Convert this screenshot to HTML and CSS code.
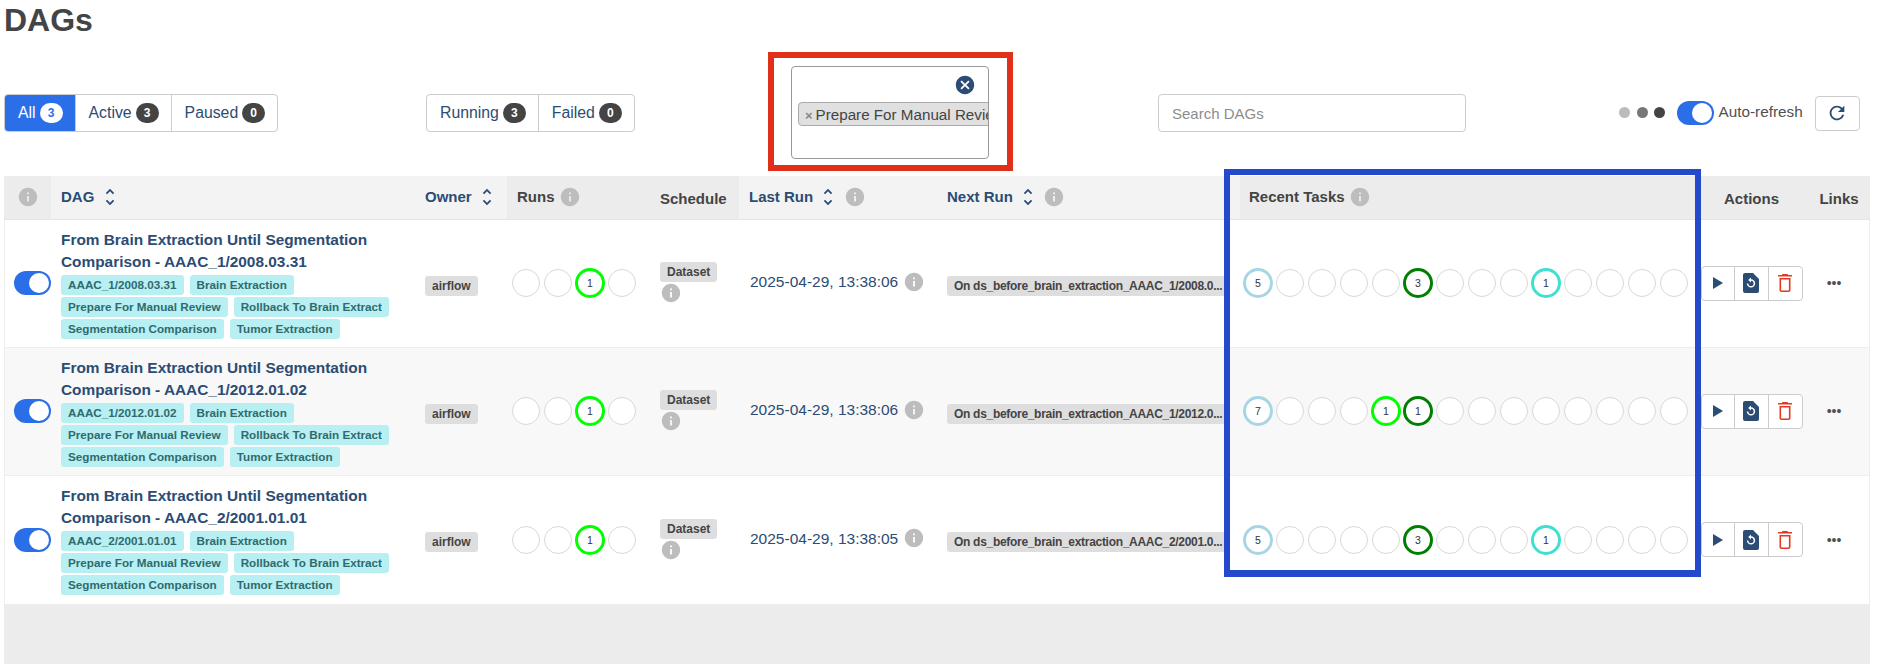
FILE: index.html
```html
<!DOCTYPE html>
<html lang="en">
<head>
<meta charset="UTF-8">
<title>DAGs - Airflow</title>
<link rel="stylesheet" href="styles.css">
</head>
<body>
<svg class="sprite" width="0" height="0">
  <symbol id="i-info" viewBox="0 0 24 24"><path d="M12 2C6.48 2 2 6.48 2 12s4.48 10 10 10 10-4.48 10-10S17.52 2 12 2zm1 15h-2v-6h2v6zm0-8h-2V7h2v2z"/></symbol>
  <symbol id="i-sort" viewBox="0 0 24 24"><path d="M12 5.83L15.17 9l1.41-1.41L12 3 7.41 7.59 8.83 9 12 5.83zm0 12.34L8.83 15l-1.41 1.41L12 21l4.59-4.59L15.17 15 12 18.17z"/></symbol>
  <symbol id="i-cancel" viewBox="0 0 24 24"><path d="M12 2C6.47 2 2 6.47 2 12s4.47 10 10 10 10-4.47 10-10S17.53 2 12 2zm5 13.59L15.59 17 12 13.41 8.41 17 7 15.59 10.59 12 7 8.41 8.41 7 12 10.59 15.59 7 17 8.41 13.41 12 17 15.59z"/></symbol>
  <symbol id="i-refresh" viewBox="0 0 24 24"><path d="M17.65 6.35C16.2 4.9 14.21 4 12 4c-4.42 0-7.99 3.58-7.99 8s3.57 8 7.99 8c3.73 0 6.84-2.55 7.73-6h-2.08c-.82 2.33-3.04 4-5.65 4-3.31 0-6-2.69-6-6s2.69-6 6-6c1.66 0 3.14.69 4.22 1.78L13 11h7V4l-2.35 2.35z"/></symbol>
  <symbol id="i-play" viewBox="0 0 10 12"><path d="M0 0v12l10-6z"/></symbol>
  <symbol id="i-doc" viewBox="0 0 16 20"><path fill-rule="evenodd" d="M2 0h8l6 6v12a2 2 0 0 1-2 2H2a2 2 0 0 1-2-2V2a2 2 0 0 1 2-2zm6 6.2V4.4L5.2 7 8 9.6V7.8a2.6 2.6 0 1 1-2.6 2.6H3.8a4.2 4.2 0 1 0 4.2-4.2z"/></symbol>
  <symbol id="i-trash" viewBox="0 0 14 18"><path fill-rule="evenodd" d="M4.5 0h5l.7 1H14v1.600H0V1h3.800zM1.500 4h11v12a2 2 0 0 1-2 2h-7a2 2 0 0 1-2-2zm1.600 1.600V16a.4.4 0 0 0 .4.4h7a.4.4 0 0 0 .4-.4V5.600z"/></symbol>
</svg>

<h1 class="title">DAGs</h1>

<div class="toolbar">
  <div class="btn-group">
    <a class="filter active">All <span class="badge">3</span></a>
    <a class="filter">Active <span class="badge">3</span></a>
    <a class="filter">Paused <span class="badge">0</span></a>
  </div>
  <div class="btn-group">
    <a class="filter">Running <span class="badge">3</span></a>
    <a class="filter">Failed <span class="badge">0</span></a>
  </div>
  <div class="tag-select">
    <svg class="clear-icon"><use href="#i-cancel"/></svg>
    <div class="select-choice"><span class="choice-x">×</span>Prepare For Manual Review</div>
  </div>
  <div><input class="search" type="text" placeholder="Search DAGs"></div>
  <div class="refresh-box">
    <span class="dots"><i class="dot d1"></i><i class="dot d2"></i><i class="dot d3"></i></span>
    <span class="toggle"><i></i></span>
    <span class="auto-label">Auto-refresh</span>
    <button class="refresh-btn"><svg><use href="#i-refresh"/></svg></button>
  </div>
</div>

<div class="table-wrap">
  <table class="dags">
    <colgroup>
      <col class="c-pause"><col class="c-dag"><col class="c-owner"><col class="c-runs"><col class="c-sched">
      <col class="c-last"><col class="c-next"><col class="c-tasks"><col class="c-actions"><col class="c-links">
    </colgroup>
    <thead>
      <tr>
        <th class="center"><svg class="info"><use href="#i-info"/></svg></th>
        <th class="sortable">DAG <svg class="sort"><use href="#i-sort"/></svg></th>
        <th class="sortable">Owner <svg class="sort"><use href="#i-sort"/></svg></th>
        <th>Runs <svg class="info"><use href="#i-info"/></svg></th>
        <th>Schedule</th>
        <th class="sortable">Last Run <svg class="sort"><use href="#i-sort"/></svg> <svg class="info"><use href="#i-info"/></svg></th>
        <th class="sortable">Next Run <svg class="sort"><use href="#i-sort"/></svg> <svg class="info"><use href="#i-info"/></svg></th>
        <th class="tasks-head">Recent Tasks <svg class="info"><use href="#i-info"/></svg></th>
        <th class="center">Actions</th>
        <th class="center">Links</th>
      </tr>
    </thead>
    <tbody>
      <tr>
        <td class="pause"><span class="toggle"><i></i></span></td>
        <td>
          <a class="dag-name">From Brain Extraction Until Segmentation Comparison - AAAC_1/2008.03.31</a>
          <div class="tags">
            <span class="tag">AAAC_1/2008.03.31</span><span class="tag">Brain Extraction</span>
            <span class="tag">Prepare For Manual Review</span><span class="tag">Rollback To Brain Extract</span>
            <span class="tag">Segmentation Comparison</span><span class="tag">Tumor Extraction</span>
          </div>
        </td>
        <td><span class="label nudge">airflow</span></td>
        <td class="runs">
          <div class="circles"><span class="c"></span><span class="c"></span><span class="c on lime">1</span><span class="c"></span></div>
        </td>
        <td><span class="label">Dataset</span><svg class="info below"><use href="#i-info"/></svg></td>
        <td class="last-run">2025-04-29, 13:38:06 <svg class="info"><use href="#i-info"/></svg></td>
        <td><span class="label nudge next">On ds_before_brain_extraction_AAAC_1/2008.0...</span></td>
        <td class="tasks">
          <div class="circles">
            <span class="c on sky">5</span><span class="c"></span><span class="c"></span><span class="c"></span><span class="c"></span>
            <span class="c on green">3</span><span class="c"></span><span class="c"></span><span class="c"></span>
            <span class="c on teal">1</span><span class="c"></span><span class="c"></span><span class="c"></span><span class="c"></span>
          </div>
        </td>
        <td class="center">
          <div class="actions">
            <button><svg class="play"><use href="#i-play"/></svg></button><button><svg class="doc"><use href="#i-doc"/></svg></button><button><svg class="trash"><use href="#i-trash"/></svg></button>
          </div>
        </td>
        <td class="links">•••</td>
      </tr>
      <tr>
        <td class="pause"><span class="toggle"><i></i></span></td>
        <td>
          <a class="dag-name">From Brain Extraction Until Segmentation Comparison - AAAC_1/2012.01.02</a>
          <div class="tags">
            <span class="tag">AAAC_1/2012.01.02</span><span class="tag">Brain Extraction</span>
            <span class="tag">Prepare For Manual Review</span><span class="tag">Rollback To Brain Extract</span>
            <span class="tag">Segmentation Comparison</span><span class="tag">Tumor Extraction</span>
          </div>
        </td>
        <td><span class="label nudge">airflow</span></td>
        <td class="runs">
          <div class="circles"><span class="c"></span><span class="c"></span><span class="c on lime">1</span><span class="c"></span></div>
        </td>
        <td><span class="label">Dataset</span><svg class="info below"><use href="#i-info"/></svg></td>
        <td class="last-run">2025-04-29, 13:38:06 <svg class="info"><use href="#i-info"/></svg></td>
        <td><span class="label nudge next">On ds_before_brain_extraction_AAAC_1/2012.0...</span></td>
        <td class="tasks">
          <div class="circles">
            <span class="c on sky">7</span><span class="c"></span><span class="c"></span><span class="c"></span>
            <span class="c on lime">1</span><span class="c on green">1</span><span class="c"></span><span class="c"></span><span class="c"></span>
            <span class="c"></span><span class="c"></span><span class="c"></span><span class="c"></span><span class="c"></span>
          </div>
        </td>
        <td class="center">
          <div class="actions">
            <button><svg class="play"><use href="#i-play"/></svg></button><button><svg class="doc"><use href="#i-doc"/></svg></button><button><svg class="trash"><use href="#i-trash"/></svg></button>
          </div>
        </td>
        <td class="links">•••</td>
      </tr>
      <tr>
        <td class="pause"><span class="toggle"><i></i></span></td>
        <td>
          <a class="dag-name">From Brain Extraction Until Segmentation Comparison - AAAC_2/2001.01.01</a>
          <div class="tags">
            <span class="tag">AAAC_2/2001.01.01</span><span class="tag">Brain Extraction</span>
            <span class="tag">Prepare For Manual Review</span><span class="tag">Rollback To Brain Extract</span>
            <span class="tag">Segmentation Comparison</span><span class="tag">Tumor Extraction</span>
          </div>
        </td>
        <td><span class="label nudge">airflow</span></td>
        <td class="runs">
          <div class="circles"><span class="c"></span><span class="c"></span><span class="c on lime">1</span><span class="c"></span></div>
        </td>
        <td><span class="label">Dataset</span><svg class="info below"><use href="#i-info"/></svg></td>
        <td class="last-run">2025-04-29, 13:38:05 <svg class="info"><use href="#i-info"/></svg></td>
        <td><span class="label nudge next">On ds_before_brain_extraction_AAAC_2/2001.0...</span></td>
        <td class="tasks">
          <div class="circles">
            <span class="c on sky">5</span><span class="c"></span><span class="c"></span><span class="c"></span><span class="c"></span>
            <span class="c on green">3</span><span class="c"></span><span class="c"></span><span class="c"></span>
            <span class="c on teal">1</span><span class="c"></span><span class="c"></span><span class="c"></span><span class="c"></span>
          </div>
        </td>
        <td class="center">
          <div class="actions">
            <button><svg class="play"><use href="#i-play"/></svg></button><button><svg class="doc"><use href="#i-doc"/></svg></button><button><svg class="trash"><use href="#i-trash"/></svg></button>
          </div>
        </td>
        <td class="links">•••</td>
      </tr>
    </tbody>
  </table>
  <div class="table-foot"></div>
</div>

<div class="mark mark-red"></div>
<div class="mark mark-blue"></div>
</body>
</html>
```
FILE: styles.css
```css
html, body {
  margin: 0;
  height: 669px;
  overflow: hidden;
}
body {
  position: relative;
  font-family: "Liberation Sans", Arial, sans-serif;
  font-size: 15px;
  color: #51504f;
  background: #fff;
}
.sprite {
  position: absolute;
}
.title {
  margin: 1px 0 27px 4px;
  font-size: 32px;
  line-height: 38px;
  font-weight: 700;
  color: #444;
}

/* top bar */
.toolbar {
  display: grid;
  grid-template-columns: 422px 365px 367px 461px 1fr;
  align-items: center;
  height: 93px;
  padding-left: 4px;
  margin-bottom: 17px;
}
.btn-group {
  display: inline-flex;
  justify-self: start;
  height: 38px;
  border: 1px solid #ccc;
  border-radius: 4px;
  box-sizing: border-box;
  overflow: hidden;
}
.filter {
  display: flex;
  align-items: center;
  gap: 4px;
  padding: 1px 12px 0 13px;
  font-size: 15.8px;
  color: #2b4c74;
  border-left: 1px solid #ccc;
}
.filter:first-child {
  border-left: none;
}
.filter.active {
  background: #2a6fe8;
  color: #fff;
}
.badge {
  min-width: 23px;
  height: 20px;
  line-height: 20px;
  border-radius: 10px;
  background: #444;
  color: #fff;
  font-size: 12px;
  font-weight: 700;
  text-align: center;
}
.active .badge {
  background: #fff;
  color: #2a6fe8;
}
.tag-select {
  position: relative;
  box-sizing: border-box;
  width: 198px;
  height: 93px;
  padding: 35px 0 0 6px;
  border: 1px solid #999;
  border-radius: 4px;
  overflow: hidden;
}
.clear-icon {
  position: absolute;
  top: 7px;
  right: 12px;
  width: 22px;
  height: 22px;
  fill: #2b4c74;
}
.select-choice {
  box-sizing: border-box;
  width: 240px;
  height: 24px;
  line-height: 23px;
  border: 1px solid #aaa;
  border-radius: 4px;
  background: #e0e0e0;
  color: #444;
  font-size: 15.2px;
  white-space: nowrap;
}
.choice-x {
  margin: 0 3px 0 6px;
  color: #888;
  font-weight: 700;
  font-size: 13px;
}
.search {
  box-sizing: border-box;
  display: block;
  width: 308px;
  height: 38px;
  padding: 2px 13px 0;
  border: 1px solid #ccc;
  border-radius: 4px;
  font: 15px "Liberation Sans", Arial, sans-serif;
}
.search::placeholder {
  color: #8d8d8d;
}
.refresh-box {
  display: flex;
  align-items: center;
}
.dots {
  display: flex;
  gap: 6.5px;
  margin-right: 11.5px;
}
.dot {
  width: 11px;
  height: 11px;
  border-radius: 50%;
}
.d1 { background: #bbb; }
.d2 { background: #777; }
.d3 { background: #444; }
.auto-label {
  margin: 0 12px 2px 5px;
  font-size: 15.3px;
}
.toggle {
  display: inline-block;
  box-sizing: border-box;
  width: 37px;
  height: 24px;
  padding: 2px 2px 2px 15px;
  border-radius: 12px;
  background: #2a6fe8;
  vertical-align: middle;
}
.toggle i {
  display: block;
  width: 20px;
  height: 20px;
  border-radius: 50%;
  background: #fff;
}
.refresh-btn {
  width: 45px;
  height: 35px;
  margin-top: 1px;
  padding: 0;
  background: #fff;
  border: 1px solid #ccc;
  border-radius: 4px;
}
.refresh-btn svg {
  display: block;
  width: 22px;
  height: 22px;
  margin: auto;
  fill: #2b4c74;
}

/* table */
.table-wrap {
  margin: 0 11px 0 4px;
  background: #ececec;
}
.dags {
  width: 1866px;
  table-layout: fixed;
  border-collapse: collapse;
}
.c-pause { width: 47px; }
.c-dag { width: 364px; }
.c-owner { width: 92px; }
.c-runs { width: 143px; }
.c-sched { width: 89px; }
.c-last { width: 198px; }
.c-next { width: 303px; }
.c-tasks { width: 455px; }
.c-actions { width: 113px; }
.c-links { width: 62px; }
th {
  height: 43px;
  padding: 2px 0 0 10px;
  background: #ececec;
  color: #444;
  font-size: 15px;
  font-weight: 700;
  text-align: left;
  border-bottom: 1px solid #e4e4e4;
  white-space: nowrap;
  box-sizing: border-box;
}
th.sortable {
  background: #f3f3f3;
  color: #2b4c74;
}
th.tasks-head {
  padding-left: 9px;
}
th.center, td.center {
  padding-left: 0;
  text-align: center;
}
th svg, td svg {
  vertical-align: middle;
}
td {
  height: 128px;
  padding: 0 0 0 10px;
  background: #fff;
  border-bottom: 1px solid #eee;
  box-sizing: border-box;
}
tbody tr:nth-child(even) td {
  background: #f8f8f8;
}
tbody tr:last-child td {
  height: 129px;
  border-bottom: none;
}
tbody td:first-child {
  box-shadow: inset 1px 0 0 #eee;
}
tbody td:last-child {
  box-shadow: inset -1px 0 0 #eee;
}
.info {
  width: 22px;
  height: 22px;
  margin-top: -3px;
  fill: #bdbdbd;
}
.info.below {
  display: block;
  margin: 0;
}
.sort {
  width: 22px;
  height: 22px;
  margin-top: -3px;
  fill: #2b4c74;
}
td.pause {
  padding-left: 10px;
}
.dag-name {
  display: block;
  margin-top: 1px;
  font-size: 15.4px;
  font-weight: 700;
  line-height: 22px;
  color: #2b4c74;
}
.tags {
  display: flex;
  flex-wrap: wrap;
  gap: 2px 6px;
  margin-top: 2px;
}
.tag {
  height: 20px;
  line-height: 20px;
  padding: 0 7px;
  border-radius: 3px;
  background: #b8eff3;
  color: #2f6b6d;
  font-size: 11.7px;
  font-weight: 700;
  white-space: nowrap;
}
.label {
  display: inline-block;
  height: 20px;
  line-height: 20px;
  padding: 0 7px;
  border-radius: 3px;
  background: #dedede;
  color: #444;
  font-size: 12px;
  font-weight: 700;
  white-space: nowrap;
}
.nudge {
  margin-top: 5px;
}
.next {
  letter-spacing: -0.3px;
}
td.runs {
  padding-left: 5px;
}
td.tasks {
  padding-left: 4px;
}
td.last-run {
  padding-left: 11px;
}
.circles {
  display: flex;
  gap: 4px;
}
.c {
  box-sizing: border-box;
  flex: none;
  width: 28px;
  height: 28px;
  border: 1.5px solid #d8d8d8;
  border-radius: 50%;
  background: #fff;
  color: #333;
  font-size: 10.5px;
  line-height: 25px;
  text-align: center;
}
.c.on {
  width: 30px;
  height: 30px;
  margin: -1px;
  border-width: 3px;
  line-height: 24px;
}
.c.lime { border-color: #00ff00; }
.c.green { border-color: #008000; }
.c.teal { border-color: #40e0d0; }
.c.sky { border-color: #a8d5e6; }
.last-run {
  color: #2b4c74;
  font-size: 15.5px;
  white-space: nowrap;
}
.actions {
  display: inline-flex;
  vertical-align: middle;
  height: 35px;
  box-sizing: border-box;
  border: 1px solid #ccc;
  border-radius: 4px;
  background: #fff;
  overflow: hidden;
}
.actions button {
  display: flex;
  align-items: center;
  justify-content: center;
  width: 34px;
  padding: 0;
  background: none;
  border: none;
  border-left: 1px solid #ccc;
}
.actions button:first-child {
  width: 32px;
  border-left: none;
}
.play {
  width: 10px;
  height: 12px;
  fill: #2b4c74;
}
.doc {
  width: 16px;
  height: 20px;
  fill: #2b4c74;
}
.trash {
  width: 14px;
  height: 18px;
  fill: #e43921;
}
td.links {
  padding: 0 10px 0 0;
  text-align: center;
  color: #51504f;
  font-size: 14px;
}
.table-foot {
  height: 60px;
}

/* annotations drawn over the screenshot */
.mark {
  position: absolute;
  box-sizing: border-box;
  pointer-events: none;
}
.mark-red {
  left: 768px;
  top: 52px;
  width: 245px;
  height: 119px;
  border: 6px solid #e0301a;
}
.mark-blue {
  left: 1224px;
  top: 169px;
  width: 477px;
  height: 408px;
  border: 6px solid #2449cf;
  border-bottom-width: 7px;
}
```
